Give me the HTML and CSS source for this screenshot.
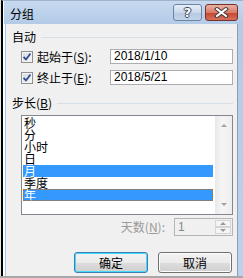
FILE: index.html
```html
<!DOCTYPE html>
<html lang="zh-CN">
<head>
    <meta charset="UTF-8">
    <title>分组</title>
    <link rel="stylesheet" href="styles.css">
</head>
<body>

    <div class="dialog">
        <div class="frame">
            <div class="titlebar">
                <span class="title">分组</span>
                <div class="caption-btns">
                    <span class="cap help">?</span>
                    <span class="cap close">
                        <svg width="15" height="11" viewBox="0 0 15 11">
                            <path d="M3 2 L12 9 M12 2 L3 9" stroke="#3a3a3a" stroke-width="4" stroke-linecap="square"/>
                            <path d="M3 2 L12 9 M12 2 L3 9" stroke="#fff" stroke-width="2" stroke-linecap="square"/>
                        </svg>
                    </span>
                </div>
            </div>

            <div class="client">
                <div class="group-head">
                    <span>自动</span>
                    <span class="rule"></span>
                </div>

                <div class="field-row">
                    <span class="checkbox">
                        <svg width="8" height="8" viewBox="0 0 8 8">
                            <path d="M0.5 4 L3 6.5 L7.5 0.5" fill="none" stroke="#2c4d8e" stroke-width="1.8"/>
                        </svg>
                    </span>
                    <span class="label">起始于(<u>S</u>):</span>
                    <span class="edit">2018/1/10</span>
                </div>

                <div class="field-row">
                    <span class="checkbox">
                        <svg width="8" height="8" viewBox="0 0 8 8">
                            <path d="M0.5 4 L3 6.5 L7.5 0.5" fill="none" stroke="#2c4d8e" stroke-width="1.8"/>
                        </svg>
                    </span>
                    <span class="label">终止于(<u>E</u>):</span>
                    <span class="edit">2018/5/21</span>
                </div>

                <div class="group-head step-head">
                    <span>步长(<u>B</u>)</span>
                    <span class="rule"></span>
                </div>

                <div class="listbox">
                    <ul class="items">
                        <li>秒</li>
                        <li>分</li>
                        <li>小时</li>
                        <li>日</li>
                        <li class="selected">月</li>
                        <li>季度</li>
                        <li class="selected focused">年</li>
                    </ul>
                    <div class="scrollbar">
                        <span class="arrow up"></span>
                        <span class="arrow down"></span>
                    </div>
                </div>

                <div class="spin-row">
                    <span class="label disabled">天数(<u>N</u>):</span>
                    <div class="spinner">
                        <span class="spin-value">1</span>
                        <div class="spin-btns">
                            <span class="spin-btn"><span class="arrow up"></span></span>
                            <span class="spin-btn"><span class="arrow down"></span></span>
                        </div>
                    </div>
                </div>

                <div class="btn-row">
                    <button type="button" class="btn default">确定</button>
                    <button type="button" class="btn">取消</button>
                </div>
            </div>
        </div>
    </div>

</body>
</html>
```

FILE: styles.css
```css
body {
    margin: 0;
    width: 243px;
    height: 278px;
    background: #a8a8a8;
    font-family: "Noto Sans CJK SC", "Liberation Sans", sans-serif;
    font-size: 12px;
    line-height: 12px;
    color: #000;
}
.dialog {
    display: flex;
    width: 243px;
    height: 276px;
    box-sizing: border-box;
    border-left: 1px solid #e6e6e6;
}
.frame {
    flex: 1;
    display: flex;
    flex-direction: column;
    border-left: 2px solid #000;
    border-top: 1px solid #9fb2ca;
    padding: 0 5px 0 1px;
    background: linear-gradient(#c6d9ef, #b3cbe7 23px, #bcd2ec);
    box-shadow: inset 1px 0 #fff;
}
.titlebar {
    height: 23px;
    display: flex;
    justify-content: space-between;
    align-items: flex-start;
}
.title {
    padding: 7px 0 0 6px;
}
.caption-btns {
    display: flex;
    gap: 3px;
    margin-top: 3px;
}
.cap {
    height: 17px;
    box-sizing: border-box;
    border-radius: 3px;
    display: flex;
    align-items: center;
    justify-content: center;
}
.help {
    width: 29px;
    border: 1px solid #6f84a3;
    background: linear-gradient(#e6eef8, #c9d8ea 50%, #b5c9e2 51%, #c2d4ea);
    color: #fff;
    font-family: "DejaVu Sans", sans-serif;
    font-weight: bold;
    font-size: 13px;
    text-shadow: 1px 0 #3a4556, -1px 0 #3a4556, 0 1px #3a4556, 0 -1px #3a4556;
}
.close {
    width: 33px;
    border: 1px solid #74322b;
    background: linear-gradient(#eab1a4, #d97b68 50%, #c5452f 51%, #d8705a);
}
.client {
    flex: 1;
    display: flex;
    flex-direction: column;
    background: #f0f0f0;
    border-left: 1px solid #fff;
    border-right: 1px solid #8d9db3;
    box-shadow: inset 1px 0 #a6c6ea;
    padding: 0 4px 0 7px;
}
.group-head {
    display: flex;
    align-items: center;
    gap: 5px;
    height: 12px;
    margin-top: 7px;
}
.rule {
    flex: 1;
    height: 1px;
    background: #d5dfe5;
}
.step-head {
    margin-top: 12px;
}
.field-row {
    display: flex;
    align-items: center;
    height: 15px;
    margin: 6px 0 0 9px;
}
.field-row + .field-row {
    margin-top: 6px;
}
.checkbox {
    width: 12px;
    height: 12px;
    box-sizing: border-box;
    border: 1px solid #8e8f8f;
    background: linear-gradient(135deg, #d4d8de, #f7f7f7);
    box-shadow: inset 0 0 0 1px #f4f4f4;
    display: flex;
    align-items: center;
    justify-content: center;
    margin-right: 4px;
}
.edit {
    margin-left: auto;
    width: 123px;
    height: 15px;
    box-sizing: border-box;
    border: 1px solid #abadb3;
    background: #fff;
    padding-left: 3px;
    font-family: "Liberation Sans", sans-serif;
    font-size: 12px;
    line-height: 13px;
}
.listbox {
    display: flex;
    height: 100px;
    box-sizing: border-box;
    margin: 6px 0 0 9px;
    border: 1px solid #828790;
    background: #fff;
}
.items {
    flex: 1;
    list-style: none;
    margin: 0;
    padding: 1px 1px 0 1px;
}
.items li {
    height: 12px;
    padding-left: 1px;
    box-sizing: border-box;
}
.items .selected {
    background: #3399ff;
    color: #fff;
}
.items .focused {
    outline: 1px dotted #cc6600;
    outline-offset: -1px;
}
.scrollbar {
    width: 17px;
    margin-left: 1px;
    background: linear-gradient(to right, #e9e9e9, #f5f5f5 40%, #eeeeee);
    display: flex;
    flex-direction: column;
    justify-content: space-between;
    align-items: center;
    padding: 8px 0 8px;
    box-sizing: border-box;
}
.arrow {
    width: 0;
    height: 0;
    border-left: 3px solid transparent;
    border-right: 3px solid transparent;
}
.arrow.up {
    border-bottom: 3px solid #a3a3a3;
}
.arrow.down {
    border-top: 3px solid #a3a3a3;
}
.spin-row {
    display: flex;
    justify-content: flex-end;
    align-items: center;
    gap: 9px;
    margin-top: 3px;
}
.disabled {
    color: #9a9a9a;
}
.spinner {
    display: flex;
    width: 59px;
    height: 18px;
    box-sizing: border-box;
    border: 1px solid #b5b5b5;
    background: #f0f0f0;
}
.spin-value {
    flex: 1;
    padding: 2px 0 0 3px;
    color: #8a8a8a;
    font-family: "Liberation Sans", sans-serif;
    font-size: 12px;
}
.spin-btns {
    width: 16px;
    display: flex;
    flex-direction: column;
    padding: 1px 1px 1px 0;
    gap: 0;
}
.spin-btn {
    flex: 1;
    border: 1px solid #d4d4d4;
    background: #f4f4f4;
    display: flex;
    align-items: center;
    justify-content: center;
}
.spin-btn .arrow.up {
    border-bottom-color: #9a9a9a;
}
.spin-btn .arrow.down {
    border-top-color: #9a9a9a;
}
.btn-row {
    display: flex;
    justify-content: flex-end;
    gap: 10px;
    margin: 16px 1px 0 0;
}
.btn {
    width: 74px;
    height: 21px;
    padding: 0;
    border: 1px solid #707070;
    border-radius: 3px;
    background: linear-gradient(#f2f2f2, #ebebeb 50%, #dddddd 51%, #cfcfcf);
    box-shadow: inset 0 0 0 1px #fcfcfc;
    font-family: "Noto Sans CJK SC", sans-serif;
    font-size: 12px;
    line-height: 12px;
    color: #000;
}
.btn.default {
    border-color: #3c7fb1;
    box-shadow: inset 0 0 0 1px #48d8fb;
}
```
